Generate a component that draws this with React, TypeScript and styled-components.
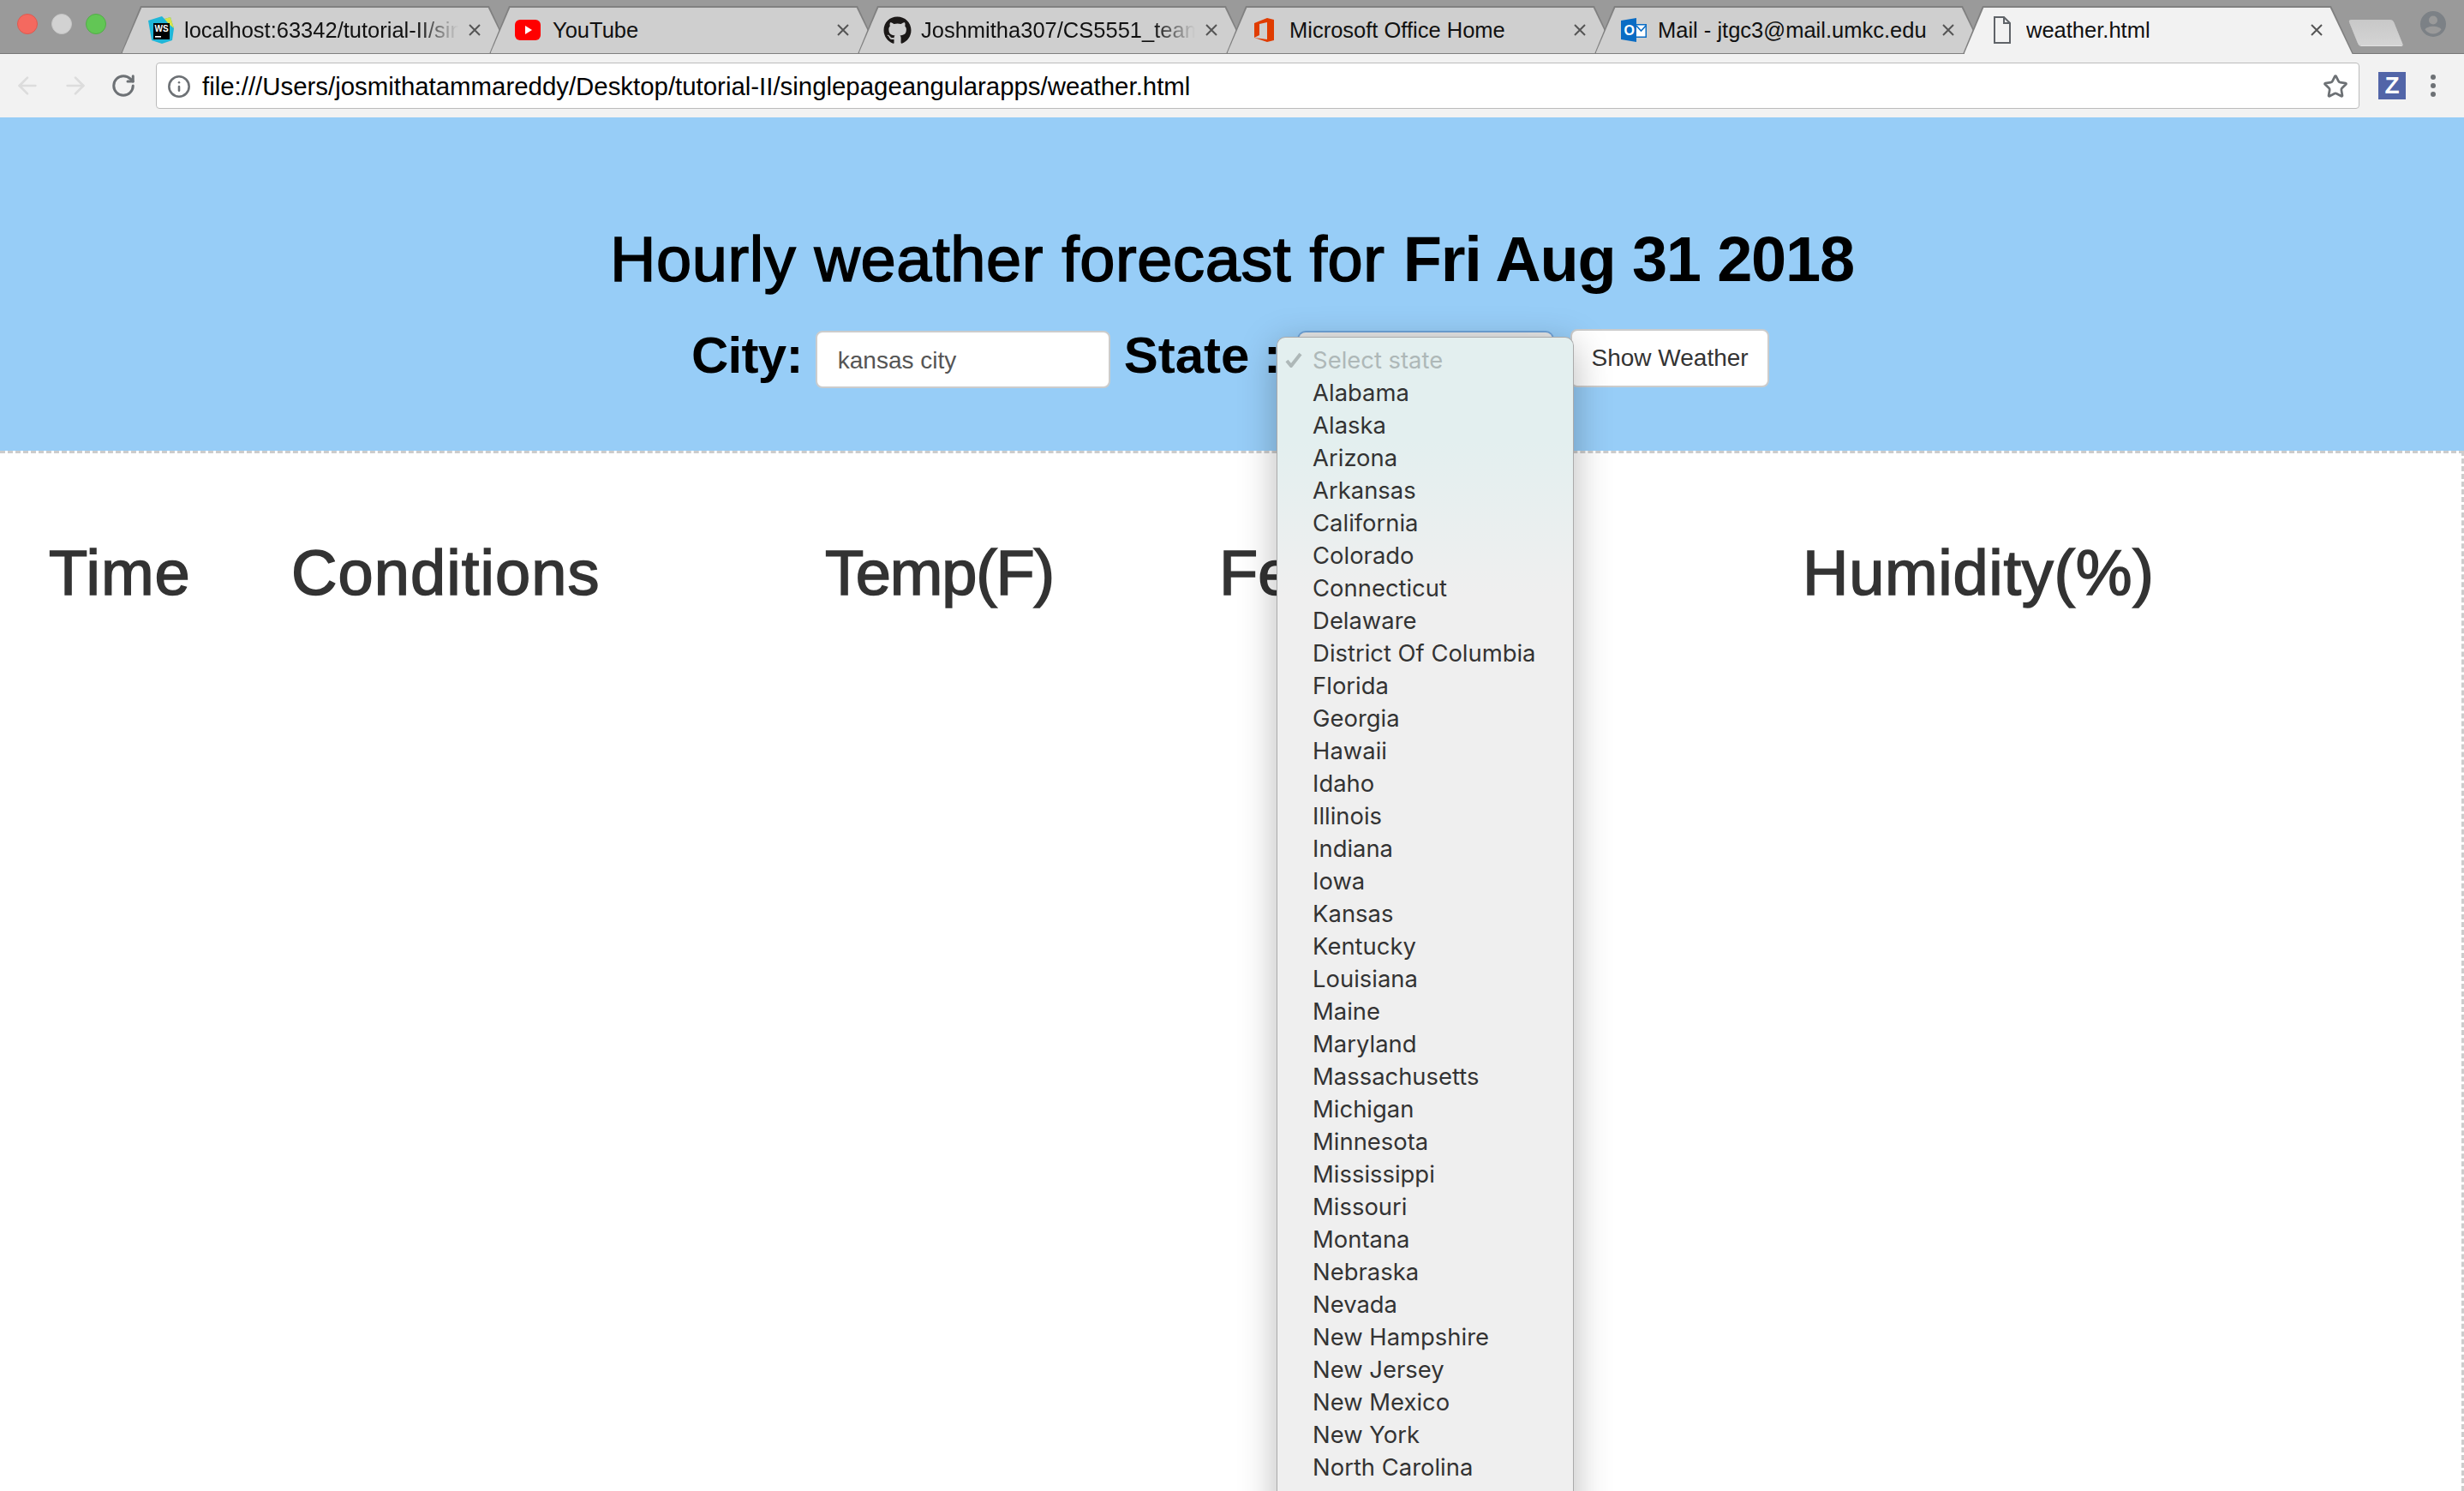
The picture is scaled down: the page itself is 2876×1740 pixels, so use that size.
import React from "react";
import styled, { createGlobalStyle } from "styled-components";
import { ArrowLeft, ArrowRight, RotateCw, Info, Star } from "lucide-react";
import { FaGithub } from "react-icons/fa";

const GlobalStyle = createGlobalStyle`
    html, body {
        margin: 0;
        padding: 0;
        background: #fff;
    }
    * {
        box-sizing: border-box;
    }
`;

const Page = styled.div`
    width: 2876px;
    height: 1740px;
    overflow: hidden;
    font-family: "Liberation Sans", Arial, sans-serif;
`;

/* ---------- browser chrome ---------- */

const TabStrip = styled.div`
    height: 63px;
    background: #9a9a9a;
    border-bottom: 1px solid #777;
    display: flex;
    align-items: flex-start;
`;

const Lights = styled.div`
    display: flex;
    gap: 16px;
    padding: 16px 0 0 20px;
    width: 141px;
    flex: none;
`;

const Light = styled.span<{ $color: string; $edge: string }>`
    width: 24px;
    height: 24px;
    border-radius: 50%;
    background: ${(p) => p.$color};
    border: 1px solid ${(p) => p.$edge};
`;

const Tabs = styled.div`
    display: flex;
    margin-top: 7px;
    flex: none;
`;

const Tab = styled.div<{ $active?: boolean }>`
    position: relative;
    width: 456px;
    height: 56px;
    margin-right: -26px;
    padding-left: 30px;
    display: flex;
    align-items: center;
    z-index: ${(p) => (p.$active ? 2 : 1)};
    &::before,
    &::after {
        content: "";
        position: absolute;
        clip-path: polygon(0 100%, 23px 0, calc(100% - 26px) 0, 100% 100%);
    }
    &::before {
        inset: 0;
        background: #808080;
    }
    &::after {
        inset: 1.5px 1.5px ${(p) => (p.$active ? "0" : "1px")} 1.5px;
        background: ${(p) => (p.$active ? "#f2f2f2" : "#cfcfcf")};
    }
`;

const TabIcon = styled.span<{ $shift: number }>`
    position: relative;
    z-index: 1;
    width: 44px;
    padding-left: ${(p) => p.$shift}px;
    flex: none;
    display: flex;
    align-items: center;
`;

const TabTitle = styled.span<{ $fade?: boolean }>`
    position: relative;
    z-index: 1;
    width: 320px;
    flex: none;
    font-size: 25.5px;
    line-height: 30px;
    color: #111;
    white-space: nowrap;
    overflow: hidden;
    ${(p) =>
        p.$fade &&
        `mask-image: linear-gradient(to right, #000 85%, transparent 100%);`}
`;

const TabClose = styled.span`
    position: relative;
    z-index: 1;
    margin-left: 11px;
    width: 16px;
    height: 16px;
    flex: none;
`;

const NewTab = styled.div`
    width: 52px;
    height: 30px;
    margin: 23px 0 0 26px;
    background: linear-gradient(to bottom, #c8c8c8, #d4d4d4);
    border-radius: 3px;
    transform: skewX(22deg);
    box-shadow: 0 1px 0 #e2e2e2;
    flex: none;
`;

const Profile = styled.div`
    margin: 13px 0 0 26px;
    flex: none;
    line-height: 0;
`;

const Toolbar = styled.div`
    height: 74px;
    background: #f2f2f2;
    display: flex;
    align-items: center;
    padding-left: 4px;
`;

const NavButton = styled.div<{ $color: string }>`
    width: 56px;
    display: flex;
    justify-content: center;
    color: ${(p) => p.$color};
`;

const AddressBar = styled.div`
    width: 2572px;
    height: 54px;
    margin-left: 10px;
    padding: 2px 12px 0 12px;
    background: #fff;
    border: 1.5px solid #bbb;
    border-radius: 4px;
    display: flex;
    align-items: center;
    color: #6d7175;
`;

const Url = styled.span`
    margin-left: 13px;
    flex: 1;
    font-size: 29.4px;
    color: #000;
    white-space: nowrap;
`;

const ZoomBadge = styled.span`
    width: 32px;
    height: 32px;
    margin-left: 22px;
    background: #5265a8;
    color: #fff;
    font-weight: bold;
    font-size: 28px;
    line-height: 32px;
    text-align: center;
`;

const MenuDots = styled.div`
    margin-left: 29px;
    display: flex;
    flex-direction: column;
    gap: 4px;
    span {
        width: 6px;
        height: 6px;
        border-radius: 50%;
        background: #6d7175;
    }
`;

/* ---------- weather page ---------- */

const Hero = styled.div`
    height: 389px;
    background: #97cdf7;
    padding-top: 126px;
`;

const Heading = styled.h1`
    margin: 0;
    font-size: 74px;
    line-height: 79px;
    font-weight: normal;
    letter-spacing: 0.6px;
    -webkit-text-stroke: 1.6px #000;
    text-align: center;
    color: #000;
    b {
        font-weight: bold;
        letter-spacing: -1.2px;
        -webkit-text-stroke: 0;
    }
`;

const SearchForm = styled.div`
    display: flex;
    align-items: flex-start;
    justify-content: center;
    margin-top: 42px;
    padding-right: 4px;
`;

const FormLabel = styled.span<{ $gap: number; $track?: number }>`
    font-size: 60px;
    line-height: 62px;
    font-weight: bold;
    color: #000;
    margin-right: ${(p) => p.$gap}px;
    letter-spacing: ${(p) => p.$track ?? 0}px;
    white-space: nowrap;
`;

const CityInput = styled.div`
    width: 344px;
    height: 67px;
    margin-top: 2px;
    margin-right: 16px;
    background: #fff;
    border: 2px solid #ccc;
    border-radius: 8px;
    padding-left: 24px;
    font-size: 28px;
    line-height: 66px;
    color: #555;
`;

const SelectBox = styled.div`
    position: relative;
    width: 296px;
    height: 66px;
    margin-top: 4px;
    margin-right: 21px;
    background: #e8e8e8;
    border-radius: 8px;
    box-shadow: 0 0 0 2px #6fa3d8;
`;

const Popup = styled.div`
    position: absolute;
    top: 5px;
    left: -26px;
    width: 347px;
    height: 1347px;
    padding-top: 7px;
    z-index: 5;
    overflow: hidden;
    background: linear-gradient(to bottom, #e3efef 0, #e3efef 120px, #efefef 300px);
    border: 1px solid #aaa;
    border-bottom: 0;
    border-radius: 10px 10px 0 0;
    &::after {
        content: "";
        position: absolute;
        left: 0;
        right: 0;
        bottom: 0;
        height: 18px;
        background: linear-gradient(to bottom, rgba(239, 239, 239, 0), #efefef);
    }
`;

const PopupShadow = styled.div`
    position: absolute;
    top: 5px;
    left: -26px;
    width: 347px;
    height: 1400px;
    z-index: 4;
    border-radius: 10px 10px 0 0;
    box-shadow: 0 10px 44px rgba(0, 0, 0, 0.28);
`;

const Option = styled.div<{ $disabled?: boolean }>`
    position: relative;
    height: 38px;
    padding-left: 41px;
    font-family: Inter, "Liberation Sans", sans-serif;
    font-size: 27.4px;
    line-height: 38px;
    white-space: nowrap;
    color: ${(p) => (p.$disabled ? "#aeb8b8" : "#333")};
`;

const CheckMark = styled.svg`
    position: absolute;
    left: 9px;
    top: 10px;
`;

const ShowButton = styled.div`
    width: 232px;
    height: 68px;
    background: #fff;
    border: 2px solid #ccc;
    border-radius: 8px;
    font-size: 28px;
    line-height: 64px;
    text-align: center;
    color: #333;
`;

const Results = styled.div`
    height: 1214px;
    border-top: 3px dashed #ccc;
    border-right: 3px dashed #ccc;
    padding: 100px 0 0 57px;
`;

const HeaderRow = styled.div`
    display: grid;
    grid-template-columns: 283px 623px 460px 681px 1fr;
    font-size: 74px;
    line-height: 79px;
    color: #333;
    -webkit-text-stroke: 1.6px #333;
`;

const HeaderCell = styled.span<{ $track?: number }>`
    letter-spacing: ${(p) => p.$track ?? 0}px;
    white-space: nowrap;
`;

const closeIcon = (
    <svg width="16" height="16" viewBox="0 0 16 16">
        <path d="M2 2 L14 14 M14 2 L2 14" stroke="#555" strokeWidth="2" />
    </svg>
);

const WsIcon = () => (
    <svg width="30" height="32" viewBox="0 0 30 32">
        <path d="M0 5 L16 0 L19 3 L26 1 L30 14 L28 28 L16 32 L4 28 Z" fill="#1fb6d8" />
        <path d="M19 3 L26 1 L30 14 L24 9 Z" fill="#d8e24a" />
        <rect x="6" y="8" width="19" height="19" fill="#000" />
        <text x="7.5" y="18" fontSize="10" fontWeight="bold" fill="#fff" fontFamily="Liberation Sans">WS</text>
        <rect x="8" y="23" width="7" height="1.6" fill="#fff" />
    </svg>
);

const YoutubeIcon = () => (
    <svg width="30" height="24" viewBox="0 0 30 24">
        <rect width="30" height="24" rx="6" fill="#f00" />
        <path d="M12 7 L20 12 L12 17 Z" fill="#fff" />
    </svg>
);

const OfficeIcon = () => (
    <svg width="23" height="28" viewBox="0 0 23 28">
        <path d="M0 6 L15 0 L23 2 V26 L15 28 L0 23 L15 25 V5 L6 7 V20 L0 23 Z" fill="#e03c00" />
    </svg>
);

const OutlookIcon = () => (
    <svg width="30" height="28" viewBox="0 0 30 28">
        <rect x="17" y="7" width="13" height="16" fill="#0a6cc4" />
        <rect x="18" y="8.5" width="10.5" height="13" fill="#fff" />
        <path d="M18 9 L23.5 15 L29 9" stroke="#0a6cc4" strokeWidth="1.6" fill="none" />
        <path d="M0 3 L18 0 V28 L0 25 Z" fill="#0a6cc4" />
        <text x="3.5" y="20" fontSize="16" fontWeight="bold" fill="#fff" fontFamily="Liberation Sans">O</text>
    </svg>
);

const FileIcon = () => (
    <svg width="20" height="32" viewBox="0 0 20 32">
        <path d="M1 1 H12 L19 8 V31 H1 Z M12 1 V8 H19" fill="none" stroke="#5f6368" strokeWidth="2" />
    </svg>
);

const ProfileIcon = () => (
    <svg width="30" height="30" viewBox="0 0 30 30">
        <circle cx="15" cy="15" r="15" fill="#7c8186" />
        <circle cx="15" cy="10.5" r="5" fill="#9a9a9a" />
        <path d="M5.5 21.5 C8 16.5 22 16.5 24.5 21.5 C22 25 18.5 26.5 15 26.5 C11.5 26.5 8 25 5.5 21.5 Z" fill="#9a9a9a" />
    </svg>
);

const tabs = [
    { icon: <WsIcon />, shift: 2, title: "localhost:63342/tutorial-II/singlepage", fade: true },
    { icon: <YoutubeIcon />, shift: 0, title: "YouTube" },
    { icon: <FaGithub size={33} color="#1b1817" />, shift: 0, title: "Joshmitha307/CS5551_team_project", fade: true },
    { icon: <OfficeIcon />, shift: 3, title: "Microsoft Office Home" },
    { icon: <OutlookIcon />, shift: 1, title: "Mail - jtgc3@mail.umkc.edu" },
    { icon: <FileIcon />, shift: 6, title: "weather.html", active: true },
];

const states = [
    "Alabama", "Alaska", "Arizona", "Arkansas", "California", "Colorado", "Connecticut",
    "Delaware", "District Of Columbia", "Florida", "Georgia", "Hawaii", "Idaho", "Illinois",
    "Indiana", "Iowa", "Kansas", "Kentucky", "Louisiana", "Maine", "Maryland", "Massachusetts",
    "Michigan", "Minnesota", "Mississippi", "Missouri", "Montana", "Nebraska", "Nevada",
    "New Hampshire", "New Jersey", "New Mexico", "New York", "North Carolina", "North Dakota",
];

const App = () => {
    return (
        <Page>
            <GlobalStyle />
            <TabStrip>
                <Lights>
                    <Light $color="#f4695f" $edge="#dd5a50" />
                    <Light $color="#d2d2d2" $edge="#c4c4c4" />
                    <Light $color="#62c655" $edge="#52ad47" />
                </Lights>
                <Tabs>
                    {tabs.map((t) => (
                        <Tab key={t.title} $active={t.active}>
                            <TabIcon $shift={t.shift}>{t.icon}</TabIcon>
                            <TabTitle $fade={t.fade}>{t.title}</TabTitle>
                            <TabClose>{closeIcon}</TabClose>
                        </Tab>
                    ))}
                </Tabs>
                <NewTab />
                <Profile>
                    <ProfileIcon />
                </Profile>
            </TabStrip>
            <Toolbar>
                <NavButton $color="#dcdcdc">
                    <ArrowLeft size={32} strokeWidth={2} />
                </NavButton>
                <NavButton $color="#dcdcdc">
                    <ArrowRight size={32} strokeWidth={2} />
                </NavButton>
                <NavButton $color="#6d7175">
                    <RotateCw size={30} strokeWidth={2.4} />
                </NavButton>
                <AddressBar>
                    <Info size={28} strokeWidth={2.2} />
                    <Url>file:///Users/josmithatammareddy/Desktop/tutorial-II/singlepageangularapps/weather.html</Url>
                    <Star size={30} strokeWidth={2.2} />
                </AddressBar>
                <ZoomBadge>Z</ZoomBadge>
                <MenuDots>
                    <span />
                    <span />
                    <span />
                </MenuDots>
            </Toolbar>
            <Hero>
                <Heading>
                    Hourly weather forecast for <b>Fri Aug 31 2018</b>
                </Heading>
                <SearchForm>
                    <FormLabel $gap={15} $track={-0.7}>City:</FormLabel>
                    <CityInput>kansas city</CityInput>
                    <FormLabel $gap={21}>State :</FormLabel>
                    <SelectBox>
                        <PopupShadow />
                        <Popup>
                            <Option $disabled>
                                <CheckMark width="20" height="18" viewBox="0 0 20 18">
                                    <path d="M2 10 L7 16 L18 2" fill="none" stroke="#aeb8b8" strokeWidth="4" />
                                </CheckMark>
                                Select state
                            </Option>
                            {states.map((s) => (
                                <Option key={s}>{s}</Option>
                            ))}
                        </Popup>
                    </SelectBox>
                    <ShowButton>Show Weather</ShowButton>
                </SearchForm>
            </Hero>
            <Results>
                <HeaderRow>
                    <HeaderCell $track={1}>Time</HeaderCell>
                    <HeaderCell $track={1.1}>Conditions</HeaderCell>
                    <HeaderCell $track={-1.2}>Temp(F)</HeaderCell>
                    <HeaderCell>Feels Like</HeaderCell>
                    <HeaderCell $track={0.7}>Humidity(%)</HeaderCell>
                </HeaderRow>
            </Results>
        </Page>
    );
};

export default App;
